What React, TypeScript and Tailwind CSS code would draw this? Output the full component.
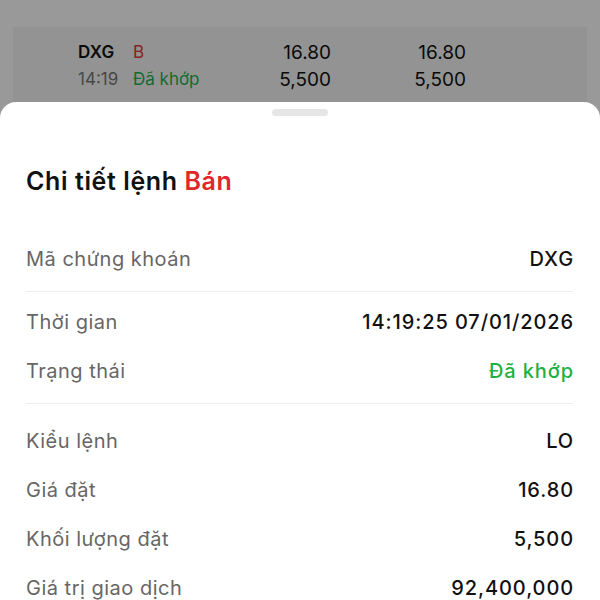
import React from 'react';

const rows: { label: string; value: string; tone?: 'green' }[][] = [
  [{ label: 'Mã chứng khoán', value: 'DXG' }],
  [
    { label: 'Thời gian', value: '14:19:25 07/01/2026' },
    { label: 'Trạng thái', value: 'Đã khớp', tone: 'green' },
  ],
  [
    { label: 'Kiểu lệnh', value: 'LO' },
    { label: 'Giá đặt', value: '16.80' },
    { label: 'Khối lượng đặt', value: '5,500' },
    { label: 'Giá trị giao dịch', value: '92,400,000' },
  ],
];

const App: React.FC = () => {
  return (
    <div
      className="relative h-[600px] w-[600px] overflow-hidden bg-white"
      style={{ fontFamily: 'Inter, "Noto Sans", sans-serif' }}
    >
      {/* Order list behind the sheet */}
      <div className="px-[13px] pt-[27px]">
        <div className="flex h-[100px] items-start bg-[#f6f6f6] pl-[65px] pt-[15px]">
          <div className="flex w-[188px] flex-col gap-[6px]">
            <div className="flex items-center text-[17px] leading-[21px]">
              <span className="w-[55px] font-semibold tracking-[0.3px] text-[#111]">DXG</span>
              <span className="text-[#e0393a]">B</span>
            </div>
            <div className="flex items-center text-[17px] leading-[21px]">
              <span className="w-[55px] text-[#777]">14:19</span>
              <span className="text-[#22b24c]">Đã khớp</span>
            </div>
          </div>
          <div className="flex w-[65px] flex-col items-end gap-[6px] text-[19px] leading-[21px] text-[#111]">
            <span>16.80</span>
            <span>5,500</span>
          </div>
          <div className="flex w-[135px] flex-col items-end gap-[6px] text-[19px] leading-[21px] text-[#111]">
            <span>16.80</span>
            <span>5,500</span>
          </div>
        </div>
      </div>

      {/* Dim overlay */}
      <div className="absolute inset-0 bg-black/40" />

      {/* Bottom sheet */}
      <div className="absolute bottom-0 left-0 right-0 top-[102px] rounded-t-[16px] bg-white px-[26px]">
        <div className="mx-auto mt-[7px] h-[7px] w-[56px] rounded-full bg-[#e6e6e6]" />
        <h2 className="mt-[50px] text-[25px] font-semibold leading-[30px] tracking-[0.6px] text-[#111]">
          Chi tiết lệnh <span className="text-[#e0282c]">Bán</span>
        </h2>
        <div className="mt-[38px] pr-px">
          {rows.map((group, gi) => (
            <div key={gi}>
              {gi === 1 && <div className="mb-[5px] mt-[8px] h-px bg-[#ededed]" />}
              {gi === 2 && <div className="mb-[12px] mt-[8px] h-px bg-[#ededed]" />}
              {group.map((r) => (
                <div key={r.label} className="flex h-[49px] items-center justify-between">
                  <span className="text-[20px] tracking-[0.5px] text-[#666]">{r.label}</span>
                  <span
                    className={
                      r.tone === 'green'
                        ? '-mr-[1px] text-[20px] font-medium tracking-[0.9px] text-[#1fb043]'
                        : '-mr-[1px] text-[20px] font-medium tracking-[0.9px] text-[#111]'
                    }
                  >
                    {r.value}
                  </span>
                </div>
              ))}
            </div>
          ))}
        </div>
      </div>
    </div>
  );
};

export default App;
